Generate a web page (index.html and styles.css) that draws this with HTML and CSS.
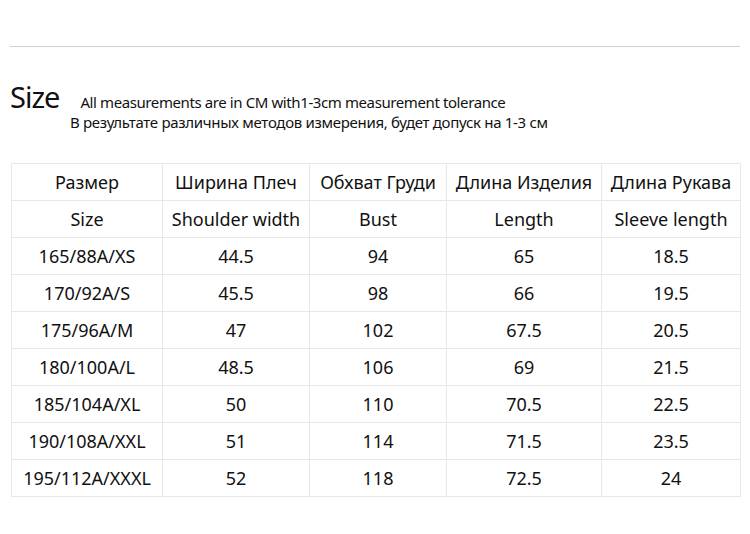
FILE: index.html
```html
<!DOCTYPE html>
<html>
<head>
<meta charset="utf-8">
<link rel="stylesheet" href="styles.css">
</head>
<body>
<div class="page">
  <hr class="rule">
  <div class="heading">
    <div class="line1"><span class="title">Size</span><span class="note">All measurements are in CM with1-3cm measurement tolerance</span></div>
    <div class="line2">В результате различных методов измерения, будет допуск на 1-3 см</div>
  </div>
  <table class="sizes">
    <colgroup>
      <col class="c1"><col class="c2"><col class="c3"><col class="c4"><col class="c5">
    </colgroup>
    <tr><td>Размер</td><td>Ширина Плеч</td><td>Обхват Груди</td><td>Длина Изделия</td><td>Длина Рукава</td></tr>
    <tr><td>Size</td><td>Shoulder width</td><td>Bust</td><td>Length</td><td>Sleeve length</td></tr>
    <tr><td>165/88A/XS</td><td>44.5</td><td>94</td><td>65</td><td>18.5</td></tr>
    <tr><td>170/92A/S</td><td>45.5</td><td>98</td><td>66</td><td>19.5</td></tr>
    <tr><td>175/96A/M</td><td>47</td><td>102</td><td>67.5</td><td>20.5</td></tr>
    <tr><td>180/100A/L</td><td>48.5</td><td>106</td><td>69</td><td>21.5</td></tr>
    <tr><td>185/104A/XL</td><td>50</td><td>110</td><td>70.5</td><td>22.5</td></tr>
    <tr><td>190/108A/XXL</td><td>51</td><td>114</td><td>71.5</td><td>23.5</td></tr>
    <tr><td>195/112A/XXXL</td><td>52</td><td>118</td><td>72.5</td><td>24</td></tr>
  </table>
</div>
</body>
</html>
```
FILE: styles.css
```css
html, body {
  margin: 0;
  padding: 0;
  background: #ffffff;
}
.page {
  width: 750px;
  height: 534px;
  font-family: "Noto Sans", "Open Sans", "DejaVu Sans", sans-serif;
  color: #111;
  padding-top: 46px;
  box-sizing: border-box;
}
.rule {
  margin: 0 10px 0 10px;
  border: 0;
  border-top: 1px solid #d0d0d0;
  height: 0;
}
.heading {
  padding: 36px 0 0 10px;
  height: 116px;
  box-sizing: border-box;
}
.line1 {
  display: flex;
  align-items: baseline;
  height: 28px;
}
.title {
  font-size: 29px;
  line-height: 28px;
  letter-spacing: -1px;
  font-weight: 400;
}
.note {
  font-size: 15px;
  margin-left: 21px;
  letter-spacing: -0.4px;
}
.line2 {
  font-size: 15px;
  margin: 1px 0 0 60px;
  letter-spacing: -0.3px;
}
.sizes {
  border-collapse: collapse;
  margin-left: 11px;
  table-layout: fixed;
  width: 729px;
}
.c1 { width: 151px; }
.c2 { width: 147px; }
.c3 { width: 137px; }
.c4 { width: 155px; }
.c5 { width: 139px; }
.sizes td {
  border: 1px solid #e8e8e8;
  height: 37px;
  padding: 0;
  text-align: center;
  font-size: 18px;
  color: #111;
  white-space: nowrap;
  box-sizing: border-box;
}
```
